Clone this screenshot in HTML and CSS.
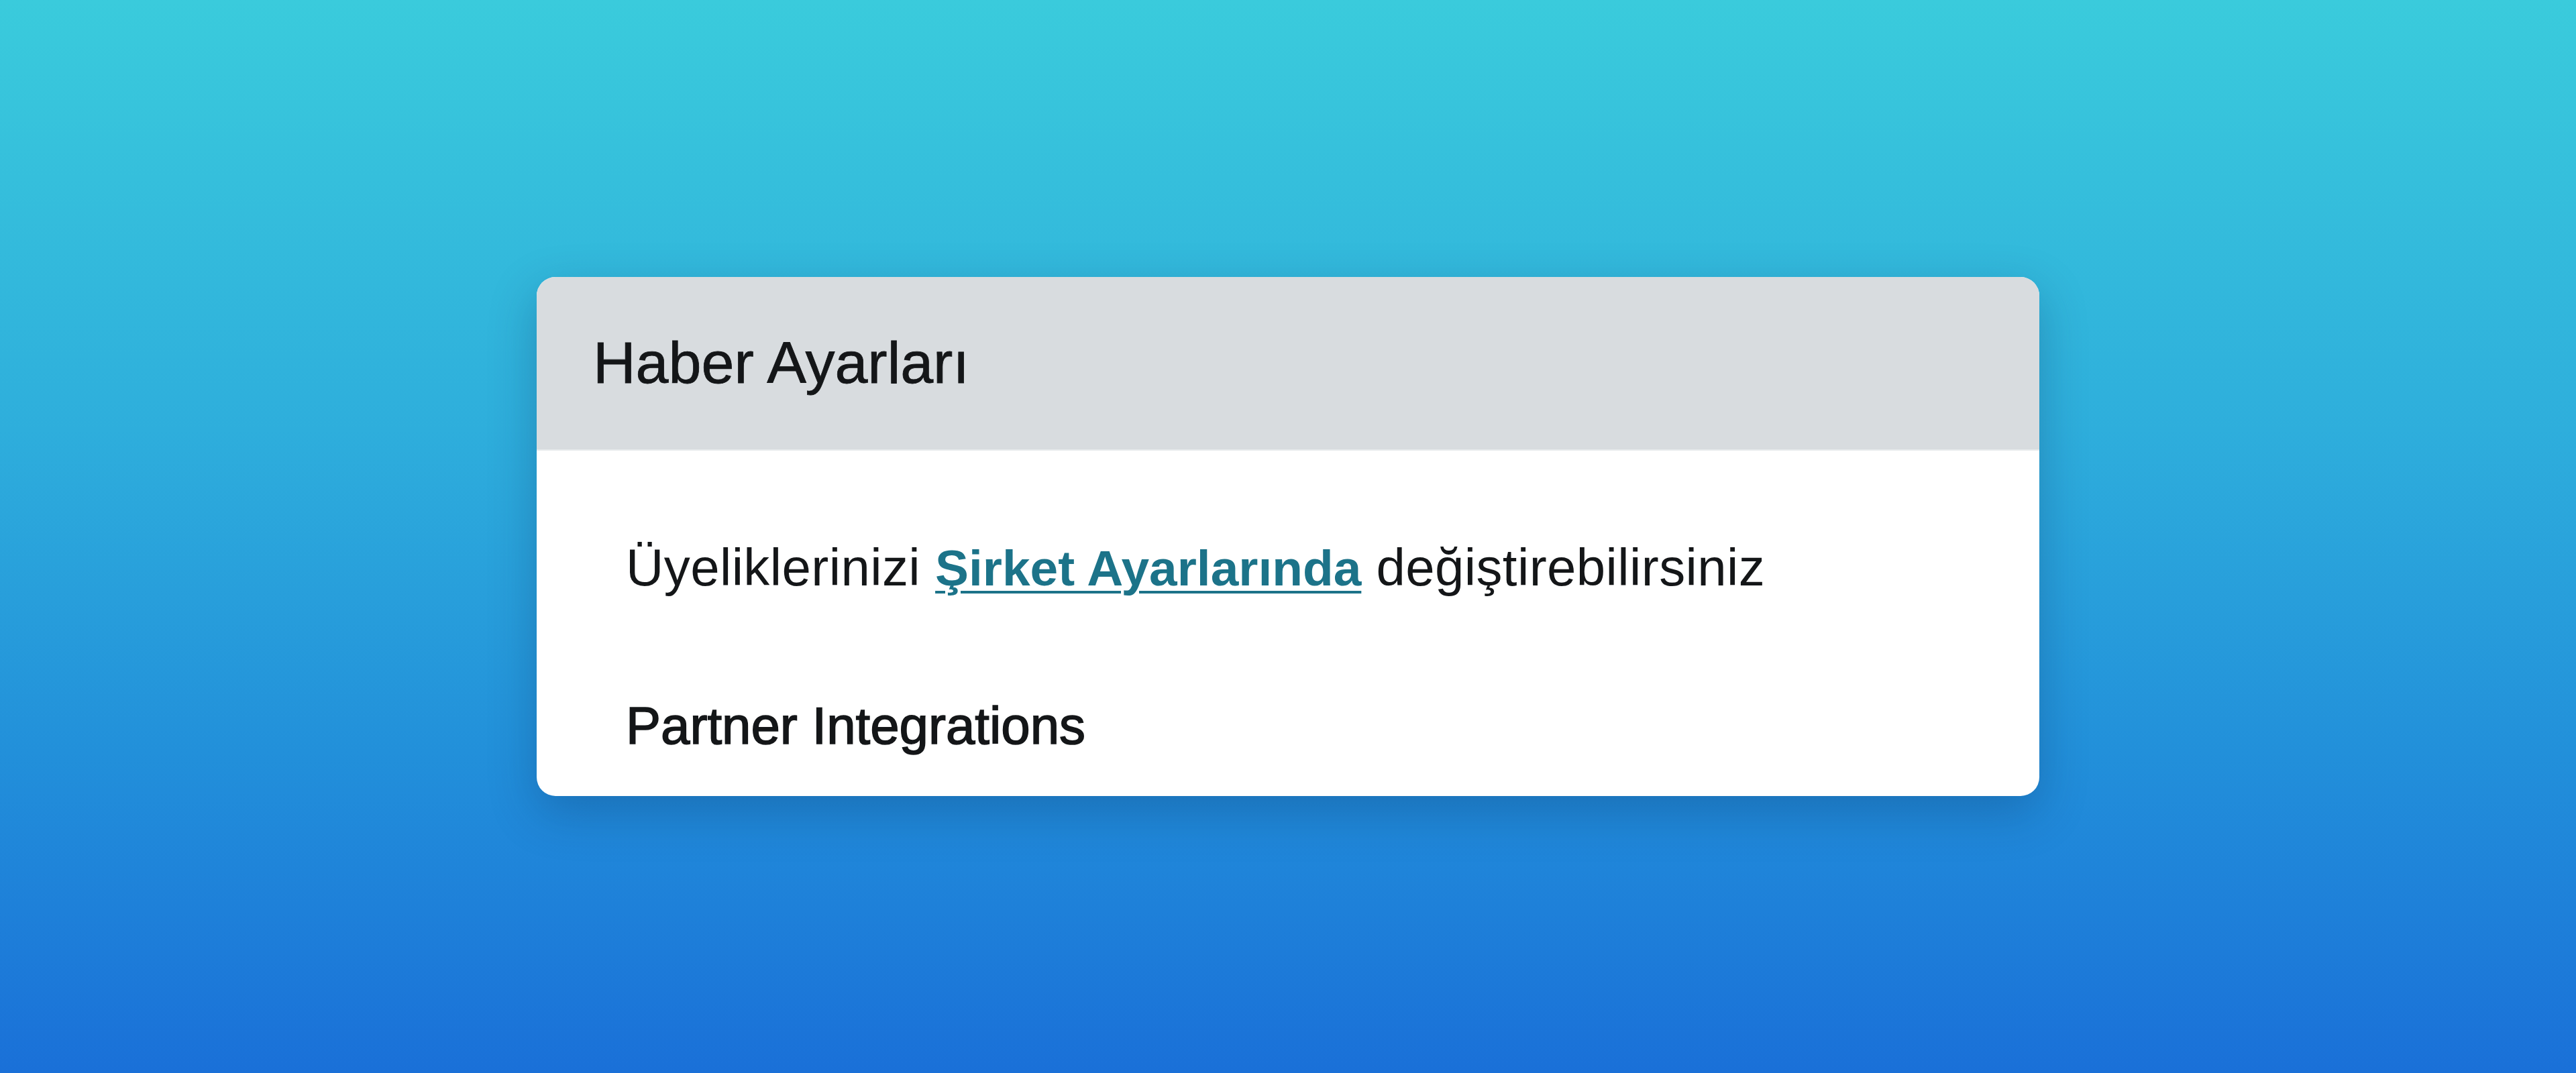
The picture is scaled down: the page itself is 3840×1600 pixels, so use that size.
FILE: index.html
```html
<!DOCTYPE html>
<html lang="tr">
<head>
<meta charset="utf-8">
<title>Haber Ayarları</title>
<link rel="stylesheet" href="styles.css">
</head>
<body>
  <main class="stage">
    <section class="card">
      <header class="card-header">
        <h1 class="card-title">Haber Ayarları</h1>
      </header>
      <div class="card-body">
        <p class="note">Üyeliklerinizi <a class="link" href="#">Şirket Ayarlarında</a> değiştirebilirsiniz</p>
        <h2 class="section-title">Partner Integrations</h2>
      </div>
    </section>
  </main>
</body>
</html>
```

FILE: styles.css
```css
html, body {
  margin: 0;
  padding: 0;
  height: 100%;
}

body {
  font-family: "Liberation Sans", Arial, sans-serif;
  color: #141618;
  background: linear-gradient(180deg, #3acbdc 0%, #2eaedc 40%, #2290da 70%, #1a70d8 100%);
}

.stage {
  min-height: 100vh;
  display: flex;
  align-items: center;
  justify-content: center;
}

.card {
  width: 2240px;
  background: #ffffff;
  border-radius: 28px;
  overflow: hidden;
  box-shadow: 0 24px 70px rgba(10, 40, 90, 0.28);
}

.card-header {
  background: #d8dcdf;
  padding: 75px 84px 77px;
  border-bottom: 2px solid #e7eaec;
}

.card-title {
  margin: 0;
  font-size: 88px;
  line-height: 1.2;
  font-weight: 400;
  -webkit-text-stroke: 0.8px #141618;
}

.card-body {
  padding: 128px 133px 58px;
}

.note {
  margin: 0;
  font-size: 78px;
  line-height: 1.2;
  font-weight: 400;
  letter-spacing: 0.4px;
}

.link {
  color: #1c7389;
  font-size: 0.96em;
  font-weight: 700;
  letter-spacing: 0;
  text-decoration: underline;
  text-decoration-thickness: 4px;
  text-underline-offset: 8px;
}

.section-title {
  margin: 142px 0 0;
  font-size: 78px;
  line-height: 1.2;
  font-weight: 400;
  -webkit-text-stroke: 1.6px #141618;
}
```
